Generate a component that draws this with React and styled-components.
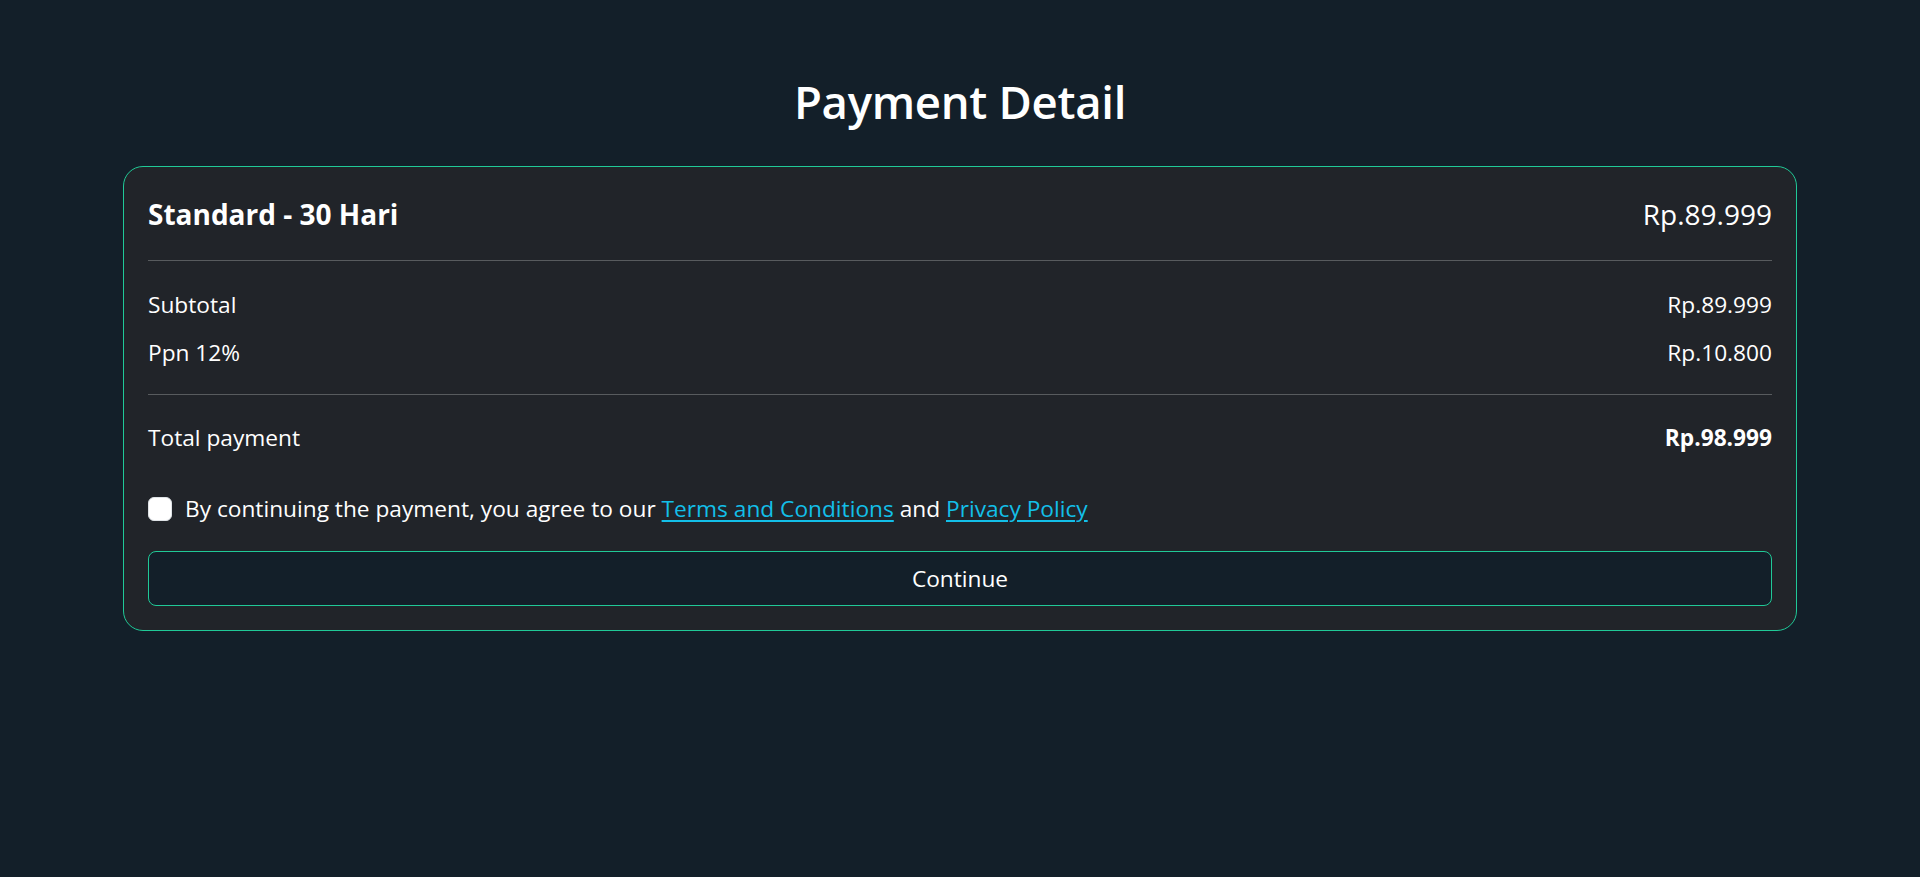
import React from "react";
import styled, { createGlobalStyle } from "styled-components";

const Global = createGlobalStyle`
  html, body {
    margin: 0;
    padding: 0;
    background: #131f29;
  }
  body {
    font-family: "Open Sans", "Noto Sans", "Liberation Sans", sans-serif;
    color: #ffffff;
  }
  * { box-sizing: border-box; }
`;

const Page = styled.main`
  min-height: 877px;
  padding: 72px 123px 40px;
  display: flex;
  flex-direction: column;
  align-items: stretch;
`;

const Title = styled.h1`
  margin: 0 0 36px;
  text-align: center;
  font-size: 45.5px;
  line-height: 58px;
  font-weight: 600;
  letter-spacing: -0.3px;
`;

const Card = styled.section`
  background: #212429;
  border: 1px solid #20c997;
  border-radius: 20px;
  padding: 26px 24px 24px;
  display: flex;
  flex-direction: column;
`;

const Row = styled.div`
  display: flex;
  justify-content: space-between;
  align-items: baseline;
  font-size: ${(p) => (p.$big ? "28px" : "22.7px")};
  line-height: ${(p) => (p.$big ? "42px" : "36px")};
  margin-top: ${(p) => p.$mt || 0}px;
`;

const Label = styled.span`
  font-weight: ${(p) => (p.$bold ? 700 : 400)};
`;

const Amount = styled.span`
  font-weight: ${(p) => (p.$bold ? 700 : 400)};
`;

const Divider = styled.hr`
  margin: ${(p) => p.$top}px 0 ${(p) => p.$bottom}px;
  border: 0;
  border-top: 1px solid rgba(255, 255, 255, 0.25);
  height: 0;
`;

const Agree = styled.label`
  display: flex;
  align-items: center;
  margin-top: 35px;
  font-size: 22.7px;
  line-height: 36px;
`;

const Check = styled.input.attrs({ type: "checkbox" })`
  appearance: none;
  -webkit-appearance: none;
  width: 24px;
  height: 24px;
  margin: 0 13px 0 0;
  background: #ffffff;
  border: 1px solid #dee2e6;
  border-radius: 6px;
  flex: none;
`;

const Link = styled.a`
  color: #13bfe8;
  text-decoration: underline;
  text-underline-offset: 3px;
  text-decoration-thickness: 1.5px;
`;

const Button = styled.button`
  margin-top: 24px;
  width: 100%;
  height: 55px;
  padding: 0 18px;
  background: #131f29;
  border: 1px solid #20c997;
  border-radius: 8px;
  color: #ffffff;
  font-family: inherit;
  font-size: 22.7px;
  line-height: 36px;
  cursor: pointer;
`;

export default function App() {
  return (
    <>
      <Global />
      <Page>
        <Title>Payment Detail</Title>
        <Card>
          <Row $big>
            <Label $bold>Standard - 30 Hari</Label>
            <Amount>Rp.89.999</Amount>
          </Row>
          <Divider $top={25} $bottom={26} />
          <Row>
            <Label>Subtotal</Label>
            <Amount>Rp.89.999</Amount>
          </Row>
          <Row $mt={12}>
            <Label>Ppn 12%</Label>
            <Amount>Rp.10.800</Amount>
          </Row>
          <Divider $top={23} $bottom={25} />
          <Row>
            <Label>Total payment</Label>
            <Amount $bold>Rp.98.999</Amount>
          </Row>
          <Agree>
            <Check />
            <span>
              By continuing the payment, you agree to our{" "}
              <Link href="#">Terms and Conditions</Link> and{" "}
              <Link href="#">Privacy Policy</Link>
            </span>
          </Agree>
          <Button type="button">Continue</Button>
        </Card>
      </Page>
    </>
  );
}
